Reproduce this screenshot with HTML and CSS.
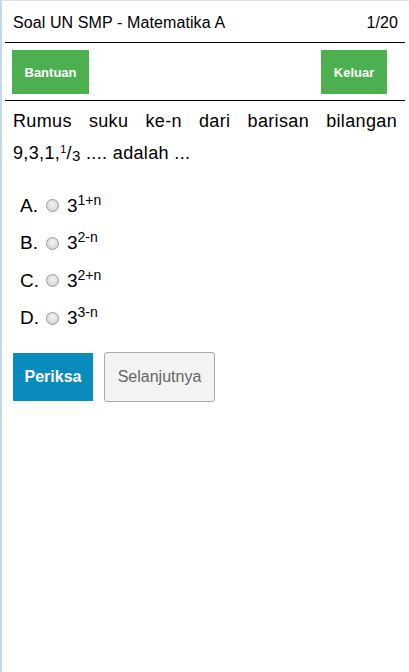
FILE: index.html
```html
<!DOCTYPE html>
<html>
<head>
<meta charset="utf-8">
<link rel="stylesheet" href="styles.css">
</head>
<body>
<div class="frame">
  <div class="header">
    <span class="title">Soal UN SMP - Matematika A</span>
    <span class="count">1/20</span>
  </div>
  <div class="toolbar">
    <button class="btn green">Bantuan</button>
    <button class="btn green">Keluar</button>
  </div>
  <div class="content">
    <p class="question">Rumus suku ke-n dari barisan bilangan 9,3,1,<sup>1</sup>/<sub>3</sub> .... adalah ...</p>
    <div class="options">
      <label class="opt"><span class="letter">A.</span><span class="radio"></span><span class="val">3<sup>1+n</sup></span></label>
      <label class="opt"><span class="letter">B.</span><span class="radio"></span><span class="val">3<sup>2-n</sup></span></label>
      <label class="opt"><span class="letter">C.</span><span class="radio"></span><span class="val">3<sup>2+n</sup></span></label>
      <label class="opt"><span class="letter">D.</span><span class="radio"></span><span class="val">3<sup>3-n</sup></span></label>
    </div>
    <div class="actions">
      <button class="btn blue">Periksa</button>
      <button class="btn gray">Selanjutnya</button>
    </div>
  </div>
</div>
</body>
</html>
```
FILE: styles.css
```css
html, body {
  margin: 0;
  padding: 0;
  background: #fff;
}
body {
  font-family: Arial, "Liberation Sans", sans-serif;
  color: #000;
}
.frame {
  min-height: 671px;
  border-left: 2px solid #c3d9ef;
  border-top: 1px solid #dde3ea;
  padding: 0 4px 0 3px;
}
.header {
  display: flex;
  justify-content: space-between;
  align-items: baseline;
  padding: 13px 7px 0 8px;
  font-size: 16px;
  letter-spacing: 0.1px;
  border-bottom: 1px solid #000;
  box-sizing: border-box;
  height: 42px;
  line-height: 17px;
}
.toolbar {
  display: flex;
  justify-content: space-between;
  padding: 7px 18px 6px 7px;
  border-bottom: 1px solid #000;
}
.btn {
  border: none;
  font-family: Arial, "Liberation Sans", sans-serif;
  padding: 0;
  margin: 0;
  cursor: pointer;
}
.green {
  background: #4caf50;
  color: #fff;
  font-weight: bold;
  font-size: 13px;
  height: 44px;
}
.green:first-child { width: 77px; }
.green:last-child { width: 66px; }
.content {
  padding: 0 8px;
}
.question {
  margin: 4px 0 0 0;
  font-size: 18px;
  letter-spacing: 0.35px;
  line-height: 32px;
  text-align: justify;
}
.question sup {
  font-size: 11px;
  vertical-align: 6px;
  line-height: 0;
}
.question sub {
  font-size: 15px;
  vertical-align: -2px;
  line-height: 0;
}
.options {
  margin-top: 18px;
  display: flex;
  flex-direction: column;
}
.opt {
  display: flex;
  align-items: center;
  height: 37.5px;
  font-size: 19px;
  padding-left: 7px;
}
.letter {
  width: 26px;
}
.radio {
  width: 11px;
  height: 11px;
  border-radius: 50%;
  border: 1px solid #9a9a9a;
  background: radial-gradient(circle at 50% 40%, #f4f4f4 0%, #dcdcdc 60%, #c8c8c8 100%);
  margin-right: 8px;
  box-sizing: content-box;
}
.val sup {
  font-size: 14px;
  line-height: 0;
  vertical-align: 7px;
}
.actions {
  display: flex;
  align-items: center;
  gap: 11px;
  margin-top: 15px;
}
.blue {
  background: #0a8bbd;
  color: #fff;
  font-weight: bold;
  font-size: 16px;
  width: 80px;
  height: 48px;
}
.gray {
  background: #f3f3f3;
  color: #666;
  font-size: 16px;
  width: 111px;
  height: 50px;
  border: 1px solid #aaa;
  border-radius: 3px;
}
```
